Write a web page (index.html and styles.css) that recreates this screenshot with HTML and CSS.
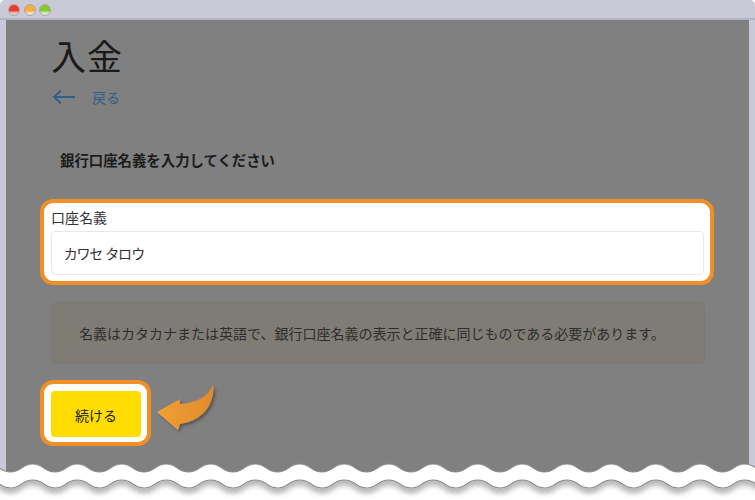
FILE: index.html
```html
<!DOCTYPE html>
<html lang="ja">
<head>
  <meta charset="UTF-8">
  <title>入金</title>
  <link rel="stylesheet" href="styles.css">
</head>
<body>
  <div class="window">
    <div class="title-bar">
      <span class="dot dot-red"></span>
      <span class="dot dot-yellow"></span>
      <span class="dot dot-green"></span>
    </div>
    <div class="content">
      <h1>入金</h1>
      <a class="back-link" href="#">
        <svg class="back-arrow" width="24" height="16" viewBox="0 0 24 16">
          <path d="M23 8H2M9 1.5 2 8l7 6.500" fill="none" stroke="#2f5f88" stroke-width="1.800"/>
        </svg>
        <span>戻る</span>
      </a>
      <h2>銀行口座名義を入力してください</h2>

      <div class="field-box">
        <label for="account_name">口座名義</label>
        <input type="text" id="account_name" value="カワセ タロウ">
      </div>

      <div class="notice">名義はカタカナまたは英語で、銀行口座名義の表示と正確に同じものである必要があります。</div>

      <div class="action-row">
        <div class="button-box">
          <button type="button" class="continue-btn">続ける</button>
        </div>
        <svg class="pointer-arrow" width="64" height="52" viewBox="0 0 64 52">
          <defs>
            <linearGradient id="arrowFill" x1="0" y1="0" x2="1" y2="0">
              <stop offset="0" stop-color="#f0a035"/>
              <stop offset="1" stop-color="#e28a2c"/>
            </linearGradient>
            <filter id="arrowShadow" x="-20%" y="-20%" width="150%" height="150%">
              <feDropShadow dx="2" dy="2" stdDeviation="1.500" flood-color="#000" flood-opacity="0.350"/>
            </filter>
          </defs>
          <path d="M1 28 24 15 24 20C40 19 52 13 57 1 59 14 52 36 24 40L22 46Z" fill="url(#arrowFill)" filter="url(#arrowShadow)"/>
        </svg>
      </div>
    </div>

    <svg class="torn-edge" width="755" height="40" viewBox="0 0 755 40">
      <defs>
        <filter id="edgeShadow" filterUnits="userSpaceOnUse" x="-40" y="-10" width="840" height="60">
          <feDropShadow dx="0" dy="5" stdDeviation="2.500" flood-color="#000" flood-opacity="0.280"/>
        </filter>
      </defs>
      <path class="edge-page" d="M-34 28c11 0 11-8 22.250-8s11 8 22.250 8c11 0 11-8 22.250-8s11 8 22.250 8c11 0 11-8 22.250-8s11 8 22.250 8c11 0 11-8 22.250-8s11 8 22.250 8c11 0 11-8 22.250-8s11 8 22.250 8c11 0 11-8 22.250-8s11 8 22.250 8c11 0 11-8 22.250-8s11 8 22.250 8c11 0 11-8 22.250-8s11 8 22.250 8c11 0 11-8 22.250-8s11 8 22.250 8c11 0 11-8 22.250-8s11 8 22.250 8c11 0 11-8 22.250-8s11 8 22.250 8c11 0 11-8 22.250-8s11 8 22.250 8c11 0 11-8 22.250-8s11 8 22.250 8c11 0 11-8 22.250-8s11 8 22.250 8c11 0 11-8 22.250-8s11 8 22.250 8c11 0 11-8 22.250-8s11 8 22.250 8c11 0 11-8 22.250-8s11 8 22.250 8c11 0 11-8 22.250-8s11 8 22.250 8V50H-34Z"/>
      <path class="edge-band" filter="url(#edgeShadow)" d="M-34 12c11 0 11-8 22.250-8s11 8 22.250 8c11 0 11-8 22.250-8s11 8 22.250 8c11 0 11-8 22.250-8s11 8 22.250 8c11 0 11-8 22.250-8s11 8 22.250 8c11 0 11-8 22.250-8s11 8 22.250 8c11 0 11-8 22.250-8s11 8 22.250 8c11 0 11-8 22.250-8s11 8 22.250 8c11 0 11-8 22.250-8s11 8 22.250 8c11 0 11-8 22.250-8s11 8 22.250 8c11 0 11-8 22.250-8s11 8 22.250 8c11 0 11-8 22.250-8s11 8 22.250 8c11 0 11-8 22.250-8s11 8 22.250 8c11 0 11-8 22.250-8s11 8 22.250 8c11 0 11-8 22.250-8s11 8 22.250 8c11 0 11-8 22.250-8s11 8 22.250 8c11 0 11-8 22.250-8s11 8 22.250 8c11 0 11-8 22.250-8s11 8 22.250 8c11 0 11-8 22.250-8s11 8 22.250 8V28c-11 0-11-8-22.250-8s-11 8-22.250 8c-11 0-11-8-22.250-8s-11 8-22.250 8c-11 0-11-8-22.250-8s-11 8-22.250 8c-11 0-11-8-22.250-8s-11 8-22.250 8c-11 0-11-8-22.250-8s-11 8-22.250 8c-11 0-11-8-22.250-8s-11 8-22.250 8c-11 0-11-8-22.250-8s-11 8-22.250 8c-11 0-11-8-22.250-8s-11 8-22.250 8c-11 0-11-8-22.250-8s-11 8-22.250 8c-11 0-11-8-22.250-8s-11 8-22.250 8c-11 0-11-8-22.250-8s-11 8-22.250 8c-11 0-11-8-22.250-8s-11 8-22.250 8c-11 0-11-8-22.250-8s-11 8-22.250 8c-11 0-11-8-22.250-8s-11 8-22.250 8c-11 0-11-8-22.250-8s-11 8-22.250 8c-11 0-11-8-22.250-8s-11 8-22.250 8c-11 0-11-8-22.250-8s-11 8-22.250 8c-11 0-11-8-22.250-8s-11 8-22.250 8Z"/>
    </svg>
  </div>
</body>
</html>
```

FILE: styles.css
```css
* {
  box-sizing: border-box;
}

html, body {
  margin: 0;
  height: 100%;
  background-color: #fff;
}

body {
  font-family: "Noto Sans CJK JP", "Noto Sans", sans-serif;
  overflow: hidden;
}

.window {
  position: relative;
  height: 500px;
  display: flex;
  flex-direction: column;
  padding: 0 6px;
  background-color: #c9c9d7;
  border-radius: 5px 5px 0 0;
  overflow: hidden;
}

.title-bar {
  flex: none;
  height: 20px;
  margin: 0 -6px;
  padding: 4px 0 0 8px;
  display: flex;
  gap: 3.5px;
  border-bottom: 2px solid #b4b4c8;
}

.dot {
  width: 12px;
  height: 12px;
  border-radius: 50%;
  border: 1px solid #a8a8a8;
}

.dot-red {
  background: linear-gradient(#ee3a2a 55%, #e6c8c0 80%);
}

.dot-yellow {
  background: linear-gradient(#f8ae3c 55%, #eee0cc 80%);
}

.dot-green {
  background: linear-gradient(#88c828 55%, #dde6cc 80%);
}

.content {
  flex: 1;
  padding: 14px 44px 0 45px;
  background-color: #808080;
}

h1 {
  margin: 0;
  font-size: 35px;
  line-height: 42px;
  font-weight: 400;
  color: #1a1a1a;
  letter-spacing: 1px;
}

.back-link {
  display: flex;
  align-items: center;
  gap: 16px;
  margin: 11px 0 0 1px;
  font-size: 14px;
  line-height: 20px;
  color: #2f5f88;
  text-decoration: none;
}

h2 {
  margin: 43px 0 0 9px;
  font-size: 14.400px;
  line-height: 20px;
  font-weight: 700;
  color: #1c1c1c;
}

.field-box {
  margin: 29px -9px 0 -11px;
  padding: 4px 6px 7px 7px;
  height: 86px;
  background-color: #fff;
  border: 4px solid #ef8f26;
  border-radius: 13px;
}

label {
  display: block;
  height: 24px;
  font-size: 14px;
  line-height: 20px;
  color: #333;
}

input {
  display: block;
  width: 100%;
  height: 44px;
  padding: 0 12px;
  border: 1px solid #e8e8e8;
  border-radius: 4px;
  font-family: inherit;
  font-feature-settings: "palt";
  font-size: 14px;
  color: #333;
}

.notice {
  margin-top: 17px;
  height: 62px;
  padding: 0 27px;
  display: flex;
  align-items: center;
  font-size: 14px;
  color: #2e2e2e;
  background-color: #7e7c74;
  border: 1px solid #7b7a70;
  border-radius: 6px;
  white-space: nowrap;
}

.action-row {
  margin: 16px 0 0 -11px;
  display: flex;
  align-items: flex-start;
}

.button-box {
  width: 111px;
  height: 66px;
  padding: 7px 6px 5px 7px;
  background-color: #fff;
  border: 4px solid #ef8f26;
  border-radius: 13px;
}

.continue-btn {
  display: block;
  width: 100%;
  height: 100%;
  padding: 1px 0 0;
  background-color: #ffdd00;
  border: none;
  border-radius: 4px;
  font-family: inherit;
  font-size: 14px;
  color: #222;
}

.pointer-arrow {
  margin: 4px 0 0 5px;
}

.torn-edge {
  position: absolute;
  left: 0;
  bottom: 0;
}

.edge-page {
  fill: #fff;
}

.edge-band {
  fill: #fff;
  stroke: #8c8c8c;
  stroke-width: 1.200;
}
```
